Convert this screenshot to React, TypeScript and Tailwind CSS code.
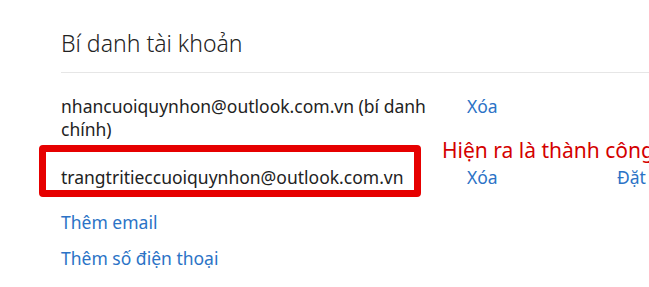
export default function App() {
  return (
    <div className="relative h-[287px] w-[649px] overflow-hidden bg-white font-['Segoe_UI','Noto_Sans',sans-serif]">
      <div className="pl-[61px] pt-[26px]">
        <h1 className="text-[23px] font-light leading-[34px] text-[#222]">Bí danh tài khoản</h1>
        <div className="mt-[12px] h-px bg-[#e6e6e6]" />

        <div className="mt-[22px] grid grid-cols-[406px_150px_1fr] text-[17.5px] leading-[23px] text-[#222]">
          <div className="pr-2">nhancuoiquynhon@outlook.com.vn (bí danh chính)</div>
          <a className="text-[#2b73c6]">Xóa</a>
          <div />
        </div>

        <div className="relative mt-[25px] grid grid-cols-[406px_150px_1fr] text-[17.5px] leading-[23px] text-[#222]">
          <div className="whitespace-nowrap">trangtritieccuoiquynhon@outlook.com.vn</div>
          <a className="text-[#2b73c6]">Xóa</a>
          <a className="whitespace-nowrap text-[#2b73c6]">Đặt làm chính</a>
          {/* highlight box */}
          <div className="absolute left-[-22px] top-[-21px] h-[52px] w-[382px] rounded-[4px] border-[7px] border-[#e60000]" />
          <div className="absolute left-[381px] top-[-30px] whitespace-nowrap text-[21px] leading-[28px] text-[#d40000]">
            Hiện ra là thành công
          </div>
        </div>

        <div className="mt-[22px] flex flex-col gap-[13px] text-[17.5px] leading-[23px] text-[#2b73c6]">
          <a>Thêm email</a>
          <a>Thêm số điện thoại</a>
        </div>
      </div>
    </div>
  );
}
